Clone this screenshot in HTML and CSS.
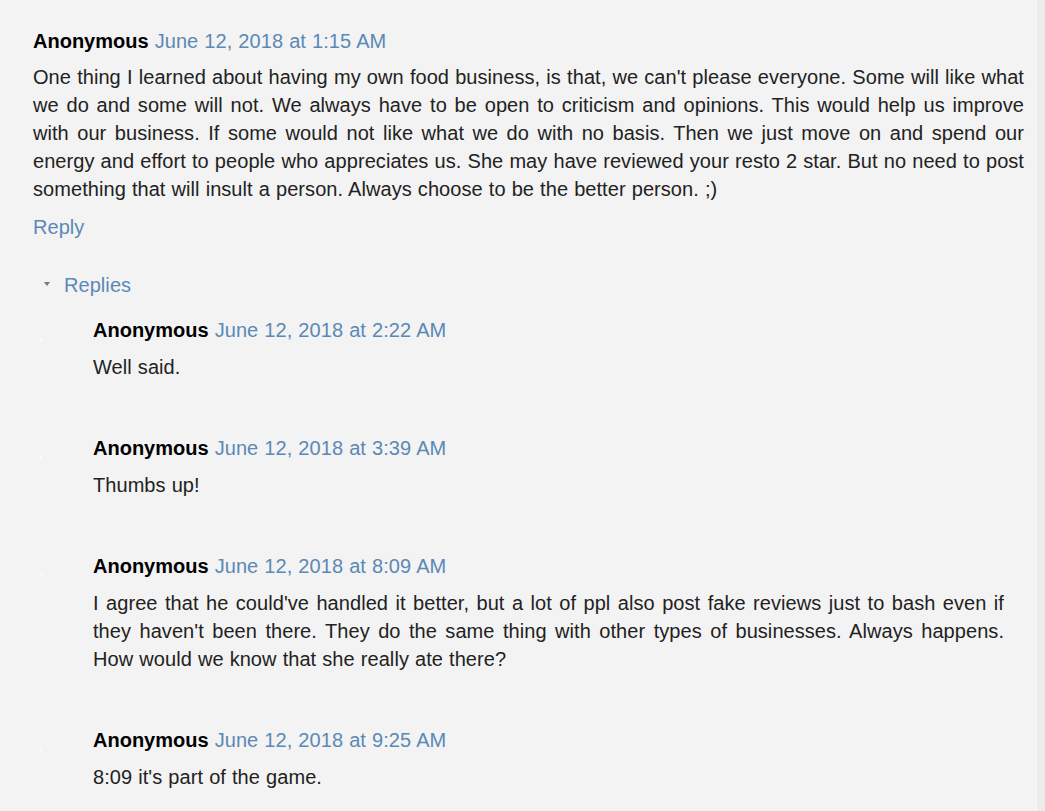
FILE: index.html
```html
<!DOCTYPE html>
<html>
<head>
<meta charset="utf-8">
<link rel="stylesheet" href="styles.css">
</head>
<body>
<div class="page">
  <div class="comments">
    <div class="comment">
      <div class="head"><span class="name">Anonymous</span> <a class="date">June 12, 2018 at 1:15 AM</a></div>
      <p class="text">One thing I learned about having my own food business, is that, we can't please everyone. Some will like what we do and some will not. We always have to be open to criticism and opinions. This would help us improve with our business. If some would not like what we do with no basis. Then we just move on and spend our energy and effort to people who appreciates us. She may have reviewed your resto 2 star. But no need to post something that will insult a person. Always choose to be the better person. ;)</p>
      <a class="reply">Reply</a>
    </div>
    <div class="replies-toggle"><span class="tri"></span><a>Replies</a></div>
    <div class="replies">
      <div class="rep">
        <span class="dot"></span>
        <div class="head"><span class="name">Anonymous</span> <a class="date">June 12, 2018 at 2:22 AM</a></div>
        <p class="text">Well said.</p>
      </div>
      <div class="rep">
        <span class="dot"></span>
        <div class="head"><span class="name">Anonymous</span> <a class="date">June 12, 2018 at 3:39 AM</a></div>
        <p class="text">Thumbs up!</p>
      </div>
      <div class="rep">
        <span class="dot"></span>
        <div class="head"><span class="name">Anonymous</span> <a class="date">June 12, 2018 at 8:09 AM</a></div>
        <p class="text">I agree that he could've handled it better, but a lot of ppl also post fake reviews just to bash even if they haven't been there. They do the same thing with other types of businesses. Always happens. How would we know that she really ate there?</p>
      </div>
      <div class="rep">
        <span class="dot"></span>
        <div class="head"><span class="name">Anonymous</span> <a class="date">June 12, 2018 at 9:25 AM</a></div>
        <p class="text">8:09 it's part of the game.</p>
      </div>
    </div>
  </div>
  <div class="scroll"></div>
</div>
</body>
</html>
```

FILE: styles.css
```css
html, body {
  margin: 0;
  padding: 0;
  background: #f3f3f3;
}
body {
  font-family: "Liberation Sans", Arial, sans-serif;
  font-size: 20px;
  line-height: 28px;
  color: #222;
  word-spacing: 0.45px;
  letter-spacing: 0.06px;
}
.page {
  display: flex;
  height: 811px;
  overflow: hidden;
}
.comments {
  width: 991px;
  padding: 27px 12px 0 33px;
}
.scroll {
  width: 8px;
  border-left: 1px solid #f8f8f8;
  background: #ececec;
}
.head {
  white-space: nowrap;
}
.name {
  font-weight: bold;
  color: #000;
  letter-spacing: 0;
}
.date, .reply, .replies-toggle a {
  color: #5b89b6;
  text-decoration: none;
}
.text {
  margin: 8px 0 0 0;
  text-align: justify;
}
.reply {
  display: block;
  margin-top: 10px;
}
.replies-toggle {
  margin-top: 30px;
  display: flex;
  align-items: center;
  padding-left: 11px;
}
.tri {
  width: 0;
  height: 0;
  border-left: 3px solid transparent;
  border-right: 3px solid transparent;
  border-top: 4px solid #777;
  margin-right: 14px;
  margin-top: -2px;
}
.replies {
  margin-top: 17px;
  padding-left: 60px;
  padding-right: 20px;
}
.rep {
  position: relative;
  margin-bottom: 53px;
}
.rep .text {
  margin-top: 9px;
}
.dot {
  position: absolute;
  left: -54px;
  top: 22px;
  width: 3px;
  height: 3px;
  border-radius: 50%;
  background: #fbfbfb;
}
```
